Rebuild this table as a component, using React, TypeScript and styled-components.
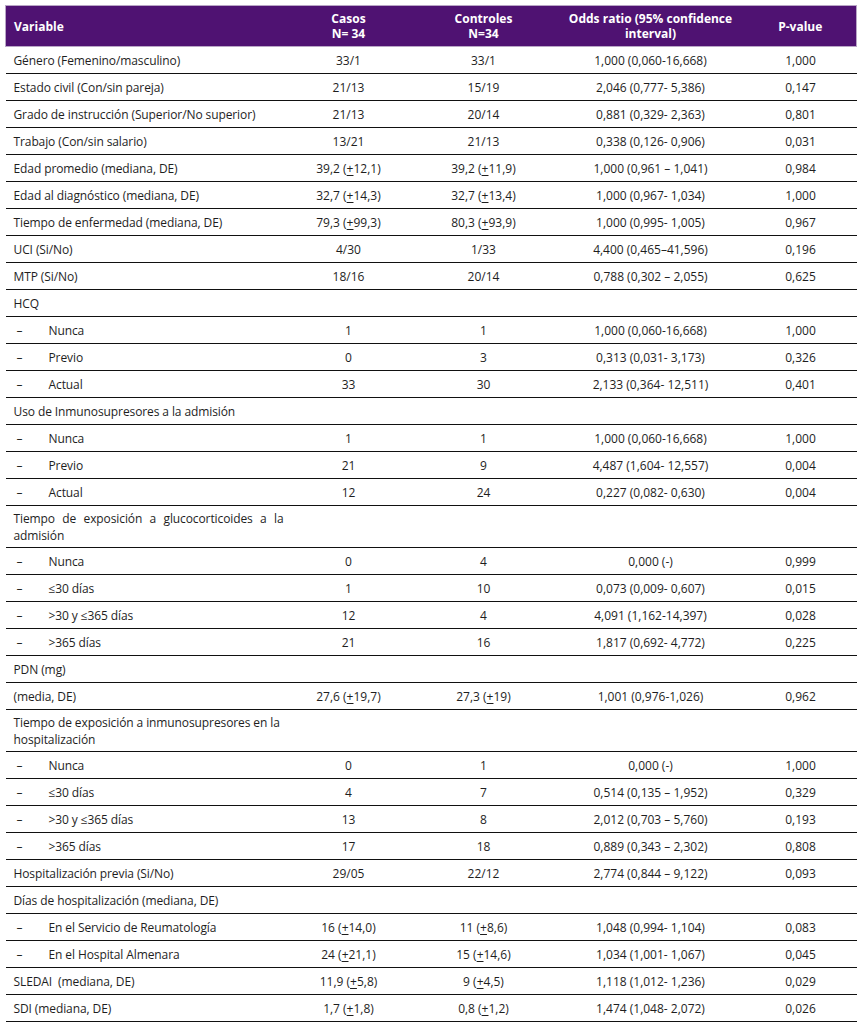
import React from "react";
import styled, { createGlobalStyle } from "styled-components";

const Global = createGlobalStyle`
  html, body { margin: 0; padding: 0; background: #ffffff; }
  body { font-family: "Open Sans", "Noto Sans", sans-serif; }
`;

const Page = styled.div`
  padding: 5px 5px 0 5px;
`;

const Table = styled.table`
  width: 851px;
  border-collapse: collapse;
  table-layout: fixed;
  font-family: "Open Sans", "Noto Sans", sans-serif;
  font-size: 12px;
  color: #1e1e1e;
`;

const HeadRow = styled.tr`
  background: #4f1272;
  height: 41px;
`;

const Th = styled.th<{ $align?: string }>`
  color: #ffffff;
  font-weight: 700;
  font-size: 12px;
  line-height: 15px;
  text-align: ${(p) => p.$align || "center"};
  padding: 0 8px;
  border-top: 1px solid #b9a6c6;
  border-bottom: 1px solid #b9a6c6;
  &:first-child { border-left: 1px solid #b9a6c6; }
  &:last-child { border-right: 1px solid #b9a6c6; }
`;

const Tr = styled.tr<{ $tall?: boolean }>`
  height: ${(p) => (p.$tall ? "42px" : "27px")};
  border-bottom: 1px solid #111;
`;

const Td = styled.td<{ $align?: string }>`
  padding: 0 8px;
  line-height: 17px;
  vertical-align: middle;
  text-align: ${(p) => p.$align || "center"};
`;

const LabelTd = styled.td<{ $justify?: boolean }>`
  padding: 0 3px 0 8px;
  line-height: 17px;
  vertical-align: middle;
  text-align: ${(p) => (p.$justify ? "justify" : "left")};
  text-align-last: left;
  letter-spacing: -0.1px;
`;

const Sub = styled.div`
  display: flex;
  align-items: center;
`;

const Dash = styled.span`
  width: 35px;
  padding-left: 3px;
  box-sizing: border-box;
`;

const Pm = styled.u`
  text-decoration-thickness: 1px;
  text-underline-offset: 2px;
`;

type Row = {
  kind: "main" | "sub" | "section" | "tall";
  label: string;
  justify?: boolean;
  c?: React.ReactNode;
  k?: React.ReactNode;
  or?: string;
  p?: string;
};

const pm = (a: string, b: string) => (
  <>
    {a} (<Pm>+</Pm>
    {b})
  </>
);

const rows: Row[] = [
  { kind: "main", label: "Género (Femenino/masculino)", c: "33/1", k: "33/1", or: "1,000 (0,060-16,668)", p: "1,000" },
  { kind: "main", label: "Estado civil (Con/sin pareja)", c: "21/13", k: "15/19", or: "2,046 (0,777- 5,386)", p: "0,147" },
  { kind: "main", label: "Grado de instrucción (Superior/No superior)", c: "21/13", k: "20/14", or: "0,881 (0,329- 2,363)", p: "0,801" },
  { kind: "main", label: "Trabajo (Con/sin salario)", c: "13/21", k: "21/13", or: "0,338 (0,126- 0,906)", p: "0,031" },
  { kind: "main", label: "Edad promedio (mediana, DE)", c: pm("39,2", "12,1"), k: pm("39,2", "11,9"), or: "1,000 (0,961 – 1,041)", p: "0,984" },
  { kind: "main", label: "Edad al diagnóstico (mediana, DE)", c: pm("32,7", "14,3"), k: pm("32,7", "13,4"), or: "1,000 (0,967- 1,034)", p: "1,000" },
  { kind: "main", label: "Tiempo de enfermedad (mediana, DE)", c: pm("79,3", "99,3"), k: pm("80,3", "93,9"), or: "1,000 (0,995- 1,005)", p: "0,967" },
  { kind: "main", label: "UCI (Si/No)", c: "4/30", k: "1/33", or: "4,400 (0,465–41,596)", p: "0,196" },
  { kind: "main", label: "MTP (Si/No)", c: "18/16", k: "20/14", or: "0,788 (0,302 – 2,055)", p: "0,625" },
  { kind: "section", label: "HCQ" },
  { kind: "sub", label: "Nunca", c: "1", k: "1", or: "1,000 (0,060-16,668)", p: "1,000" },
  { kind: "sub", label: "Previo", c: "0", k: "3", or: "0,313 (0,031- 3,173)", p: "0,326" },
  { kind: "sub", label: "Actual", c: "33", k: "30", or: "2,133 (0,364- 12,511)", p: "0,401" },
  { kind: "section", label: "Uso de Inmunosupresores a la admisión" },
  { kind: "sub", label: "Nunca", c: "1", k: "1", or: "1,000 (0,060-16,668)", p: "1,000" },
  { kind: "sub", label: "Previo", c: "21", k: "9", or: "4,487 (1,604- 12,557)", p: "0,004" },
  { kind: "sub", label: "Actual", c: "12", k: "24", or: "0,227 (0,082- 0,630)", p: "0,004" },
  { kind: "tall", label: "Tiempo de exposición a glucocorticoides a la admisión", justify: true },
  { kind: "sub", label: "Nunca", c: "0", k: "4", or: "0,000 (-)", p: "0,999" },
  { kind: "sub", label: "≤30 días", c: "1", k: "10", or: "0,073 (0,009- 0,607)", p: "0,015" },
  { kind: "sub", label: ">30 y ≤365 días", c: "12", k: "4", or: "4,091 (1,162-14,397)", p: "0,028" },
  { kind: "sub", label: ">365 días", c: "21", k: "16", or: "1,817 (0,692- 4,772)", p: "0,225" },
  { kind: "section", label: "PDN (mg)" },
  { kind: "main", label: "(media, DE)", c: pm("27,6", "19,7"), k: pm("27,3", "19"), or: "1,001 (0,976-1,026)", p: "0,962" },
  { kind: "tall", label: "Tiempo de exposición a inmunosupresores en la hospitalización" },
  { kind: "sub", label: "Nunca", c: "0", k: "1", or: "0,000 (-)", p: "1,000" },
  { kind: "sub", label: "≤30 días", c: "4", k: "7", or: "0,514 (0,135 – 1,952)", p: "0,329" },
  { kind: "sub", label: ">30 y ≤365 días", c: "13", k: "8", or: "2,012 (0,703 – 5,760)", p: "0,193" },
  { kind: "sub", label: ">365 días", c: "17", k: "18", or: "0,889 (0,343 – 2,302)", p: "0,808" },
  { kind: "main", label: "Hospitalización previa (Si/No)", c: "29/05", k: "22/12", or: "2,774 (0,844 – 9,122)", p: "0,093" },
  { kind: "section", label: "Días de hospitalización (mediana, DE)" },
  { kind: "sub", label: "En el Servicio de Reumatología", c: pm("16", "14,0"), k: pm("11", "8,6"), or: "1,048 (0,994- 1,104)", p: "0,083" },
  { kind: "sub", label: "En el Hospital Almenara", c: pm("24", "21,1"), k: pm("15", "14,6"), or: "1,034 (1,001- 1,067)", p: "0,045" },
  { kind: "main", label: "SLEDAI\u00a0 (mediana, DE)", c: pm("11,9", "5,8"), k: pm("9", "4,5"), or: "1,118 (1,012- 1,236)", p: "0,029" },
  { kind: "main", label: "SDI (mediana, DE)", c: pm("1,7", "1,8"), k: pm("0,8", "1,2"), or: "1,474 (1,048- 2,072)", p: "0,026" },
];

export default function App() {
  return (
    <>
      <Global />
      <Page>
        <Table>
          <colgroup>
            <col style={{ width: 281 }} />
            <col style={{ width: 124 }} />
            <col style={{ width: 146 }} />
            <col style={{ width: 188 }} />
            <col style={{ width: 112 }} />
          </colgroup>
          <thead>
            <HeadRow>
              <Th $align="left">Variable</Th>
              <Th>
                Casos
                <br />
                N= 34
              </Th>
              <Th>
                Controles
                <br />
                N=34
              </Th>
              <Th>
                Odds ratio (95% confidence
                <br />
                interval)
              </Th>
              <Th>P-value</Th>
            </HeadRow>
          </thead>
          <tbody>
            {rows.map((r, i) => (
              <Tr key={i} $tall={r.kind === "tall"}>
                <LabelTd $justify={r.justify}>
                  {r.kind === "sub" ? (
                    <Sub>
                      <Dash>–</Dash>
                      <span>{r.label}</span>
                    </Sub>
                  ) : (
                    r.label
                  )}
                </LabelTd>
                <Td>{r.c}</Td>
                <Td>{r.k}</Td>
                <Td>{r.or}</Td>
                <Td>{r.p}</Td>
              </Tr>
            ))}
          </tbody>
        </Table>
      </Page>
    </>
  );
}
